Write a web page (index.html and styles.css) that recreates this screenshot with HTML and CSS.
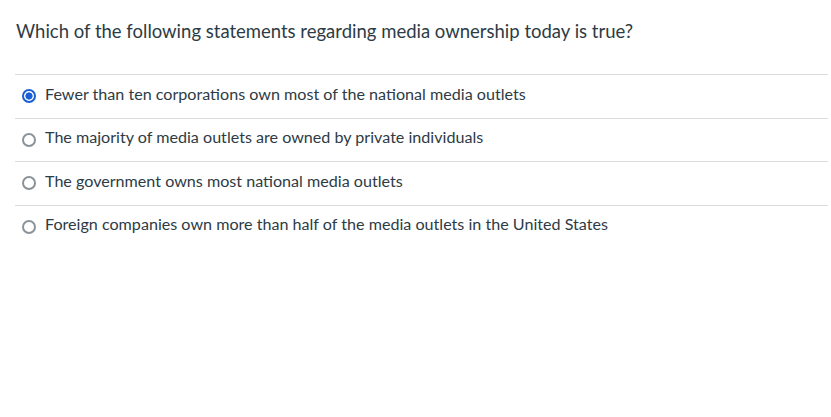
FILE: index.html
```html
<!DOCTYPE html>
<html>
<head>
<meta charset="utf-8">
<link rel="stylesheet" href="styles.css">
</head>
<body>
<div class="quiz">
  <div class="question">Which of the following statements regarding media ownership today is true?</div>
  <div class="answers">
    <label class="answer"><span class="radio checked"></span><span class="text">Fewer than ten corporations own most of the national media outlets</span></label>
    <label class="answer"><span class="radio"></span><span class="text">The majority of media outlets are owned by private individuals</span></label>
    <label class="answer"><span class="radio"></span><span class="text">The government owns most national media outlets</span></label>
    <label class="answer"><span class="radio"></span><span class="text">Foreign companies own more than half of the media outlets in the United States</span></label>
  </div>
</div>
</body>
</html>
```
FILE: styles.css
```css
html, body {
  margin: 0;
  padding: 0;
  background: #fff;
}
body {
  font-family: Lato, "Open Sans", sans-serif;
  color: #2d3b45;
}
.quiz {
  padding: 19px 3px 0 15px;
}
.question {
  font-size: 18.5px;
  line-height: 24px;
  padding-left: 1px;
  margin-bottom: 31px;
}
.answer {
  box-sizing: border-box;
  display: flex;
  align-items: flex-start;
  height: 43.67px;
  padding-top: 8.5px;
  border-top: 1px solid #dcdcdc;
  font-size: 16.13px;
}
.radio {
  box-sizing: border-box;
  width: 14px;
  height: 14px;
  border-radius: 50%;
  border: 2px solid #8b9298;
  margin: 5.5px 9.5px 0 6.5px;
  flex: none;
}
.radio.checked {
  border: 2px solid #1a5fd6;
  background: radial-gradient(circle, #1a5fd6 0 3.3px, #fff 3.9px);
}
.text {
  line-height: 20px;
}
```
